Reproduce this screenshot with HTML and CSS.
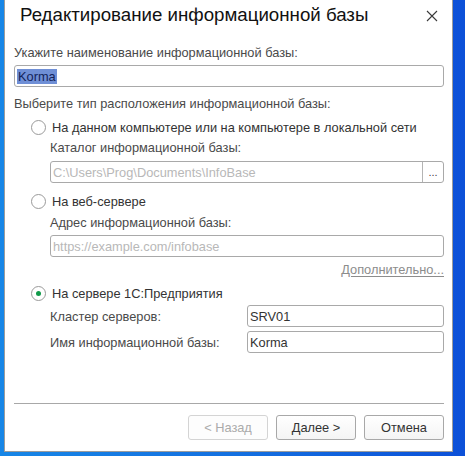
FILE: index.html
```html
<!DOCTYPE html>
<html lang="ru">
<head>
<meta charset="utf-8">
<title>Редактирование информационной базы</title>
<link rel="stylesheet" href="styles.css">
</head>
<body>
<div class="dialog">
  <div class="header">
    <div class="title">Редактирование информационной базы</div>
    <svg class="close" width="12" height="12" viewBox="0 0 12 12"><path d="M1 1L11 11M11 1L1 11" stroke="#3a3a3a" stroke-width="1.1" fill="none"/></svg>
  </div>
  <div class="content">
    <div class="label l1">Укажите наименование информационной базы:</div>
    <div class="field f1"><span class="sel">Korma</span></div>
    <div class="label l2">Выберите тип расположения информационной базы:</div>
    <div class="radio r1"><span class="circle"></span><span class="rtext">На данном компьютере или на компьютере в локальной сети</span></div>
    <div class="indent">
      <div class="label l3">Каталог информационной базы:</div>
      <div class="field f2"><span class="ph">C:\Users\Prog\Documents\InfoBase</span><span class="dots">...</span></div>
    </div>
    <div class="radio r2"><span class="circle"></span><span class="rtext">На веб-сервере</span></div>
    <div class="indent">
      <div class="label l4">Адрес информационной базы:</div>
      <div class="field f3"><span class="ph">https://example.com/infobase</span></div>
      <div class="more"><span class="link">Дополнительно...</span></div>
    </div>
    <div class="radio r3"><span class="circle on"><span class="dot"></span></span><span class="rtext">На сервере 1С:Предприятия</span></div>
    <div class="indent">
      <div class="pair p1"><span class="plabel">Кластер серверов:</span><div class="field fv">SRV01</div></div>
      <div class="pair p2"><span class="plabel">Имя информационной базы:</span><div class="field fv">Korma</div></div>
    </div>
    <div class="sep"></div>
    <div class="buttons">
      <div class="btn disabled">&lt; Назад</div>
      <div class="btn">Далее &gt;</div>
      <div class="btn">Отмена</div>
    </div>
  </div>
</div>
</body>
</html>
```
FILE: styles.css
```css
html, body {
  margin: 0;
  padding: 0;
}
body {
  width: 465px;
  height: 456px;
  overflow: hidden;
  background: linear-gradient(90deg, #1786e6 0%, #1470e0 50%, #0c50d8 100%);
  font-family: "Liberation Sans", Arial, sans-serif;
  font-size: 12.8px;
  display: flex;
  align-items: flex-start;
}
.dialog {
  margin-left: 4px;
  width: 447px;
  height: 451px;
  background: #ffffff;
  border-left: 1px solid #9c9c9c;
  border-right: 1px solid #9c9c9c;
  border-bottom: 1px solid #9c9c9c;
  display: flex;
  flex-direction: column;
}
.header {
  height: 45px;
  display: flex;
  align-items: flex-start;
  justify-content: space-between;
  padding-left: 15px;
  padding-right: 14px;
}
.title {
  margin-top: 3px;
  font-size: 18.7px;
  line-height: 24px;
  color: #111;
}
.close {
  margin-top: 10px;
}
.content {
  padding-left: 9px;
  padding-right: 8px;
  display: flex;
  flex-direction: column;
}
.label {
  line-height: 16px;
  height: 16px;
  color: #4a4a4a;
  white-space: nowrap;
}
.field {
  box-sizing: border-box;
  height: 22px;
  border: 1px solid #a9a9a9;
  border-radius: 3px;
  display: flex;
  align-items: center;
  padding-left: 2px;
  color: #333;
  white-space: nowrap;
}
.f1 { margin-top: 4px; }
.sel {
  background: #6f8fd6;
  color: #13235a;
  line-height: 15px;
  padding: 0 1px;
}
.l2 { margin-top: 9px; }
.radio {
  display: flex;
  align-items: center;
  height: 16px;
  padding-left: 17px;
  color: #333;
  white-space: nowrap;
}
.r1 { margin-top: 7px; }
.r2 { margin-top: 10px; }
.r3 { margin-top: 7px; }
.circle {
  box-sizing: border-box;
  width: 15px;
  height: 15px;
  border: 1px solid #9a9a9a;
  border-radius: 50%;
  background: #fff;
  display: flex;
  align-items: center;
  justify-content: center;
  margin-right: 6px;
  flex: none;
}
.dot {
  width: 5px;
  height: 5px;
  border-radius: 50%;
  background: #119a4a;
}
.indent {
  padding-left: 36px;
  display: flex;
  flex-direction: column;
}
.l3 { margin-top: 5px; }
.l4 { margin-top: 6px; }
.f2 { margin-top: 5px; }
.f3 { margin-top: 4px; }
.ph {
  color: #b8b8b8;
  flex: 1;
}
.dots {
  width: 20px;
  align-self: stretch;
  border-left: 1px solid #b4b4b4;
  display: flex;
  align-items: center;
  justify-content: center;
  color: #444;
  font-size: 11px;
}
.more {
  margin-top: 5px;
  display: flex;
  justify-content: flex-end;
  line-height: 16px;
  height: 16px;
}
.link {
  color: #8c8c8c;
  text-decoration: underline;
  text-underline-offset: 2px;
}
.pair {
  display: flex;
  align-items: center;
  height: 22px;
}
.p1 { margin-top: 4px; }
.p2 { margin-top: 4px; }
.plabel {
  width: 197px;
  flex: none;
  color: #4a4a4a;
  white-space: nowrap;
}
.fv {
  flex: 1;
}
.sep {
  margin-top: 50px;
  height: 1px;
  background: #a8a8a8;
}
.buttons {
  margin-top: 11px;
  display: flex;
  justify-content: flex-end;
  gap: 8px;
}
.btn {
  box-sizing: border-box;
  width: 80px;
  height: 25px;
  border: 1px solid #a8a8a8;
  border-radius: 3px;
  background: linear-gradient(#ffffff, #f4f4f4);
  display: flex;
  align-items: center;
  justify-content: center;
  color: #333;
}
.btn.disabled {
  border-color: #d4d4d4;
  color: #ababab;
  background: #fdfdfd;
}
```
